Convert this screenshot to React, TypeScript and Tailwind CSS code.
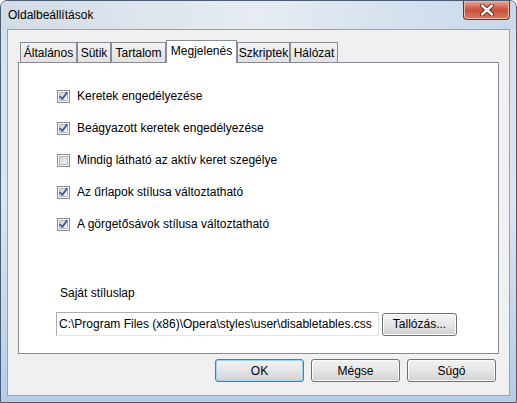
import React from "react";

const font = { fontFamily: '"Liberation Sans", Arial, sans-serif' };

function CheckBox({ checked }: { checked: boolean }) {
  return (
    <svg width="13" height="13" viewBox="0 0 13 13" className="shrink-0">
      <defs>
        <linearGradient id="cbg" x1="0" y1="0" x2="1" y2="1">
          <stop offset="0" stopColor="#cbcfd5" />
          <stop offset="1" stopColor="#f7f7f7" />
        </linearGradient>
      </defs>
      <rect x="0.5" y="0.5" width="12" height="12" fill="#f4f4f4" stroke="#8f8f8f" />
      <rect x="2.5" y="2.5" width="8" height="8" fill="url(#cbg)" stroke="#b6b9bf" strokeWidth="1" />
      {checked && (
        <path d="M3.2 6.6 L5.4 8.9 L9.8 2.8" fill="none" stroke="#3b5a9a" strokeWidth="1.8" strokeLinecap="round" strokeLinejoin="round" />
      )}
    </svg>
  );
}

function Button({ label, primary }: { label: string; primary?: boolean }) {
  return (
    <button
      className={
        "w-full h-[23px] rounded-[3px] border text-[12px] text-black flex items-center justify-center bg-gradient-to-b from-[#f2f2f2] via-[#e6e6e6] to-[#d0d0d0] " +
        (primary
          ? "border-[#3c7fb1] shadow-[inset_0_0_0_1px_#9fd5f5]"
          : "border-[#707070] shadow-[inset_0_0_0_1px_#fcfcfc]")
      }
      style={font}
    >
      {label}
    </button>
  );
}

const tabs = [
  { name: "Általános", w: "w-[57px]" },
  { name: "Sütik", w: "w-[34px]" },
  { name: "Tartalom", w: "w-[55px]" },
  { name: "Megjelenés", w: "w-[71px]", active: true },
  { name: "Szkriptek", w: "w-[53px]" },
  { name: "Hálózat", w: "w-[48px]" },
];

const options = [
  { label: "Keretek engedélyezése", checked: true },
  { label: "Beágyazott keretek engedélyezése", checked: true },
  { label: "Mindig látható az aktív keret szegélye", checked: false },
  { label: "Az űrlapok stílusa változtatható", checked: true },
  { label: "A görgetősávok stílusa változtatható", checked: true },
];

export default function App() {
  return (
    <div className="w-[517px] h-[403px] bg-white" style={font}>
      <div className="w-full h-full flex flex-col rounded-t-[7px] border border-[#4b5d72] bg-gradient-to-b from-[#d6e0ea] via-[#dbe5ef] to-[#b4cde8]">
        {/* title bar */}
        <div className="h-[28px] flex items-start justify-between bg-gradient-to-r from-[#d2dce7] via-[#e6ecf2] to-[#c7d8ea] rounded-t-[6px]">
          <span className="pl-[7px] pt-[6px] text-[12px] text-black leading-[16px]">Oldalbeállítások</span>
          <div className="mr-[6px] w-[47px] h-[19px] rounded-b-[4px] border border-t-0 border-[#6e2e25] bg-gradient-to-b from-[#e7a597] via-[#c9503a] to-[#d97a62] flex items-center justify-center shadow-[inset_0_0_0_1px_#eeb8a8]">
            <svg width="14" height="12" viewBox="0 0 14 12">
              <path d="M2 1.5 L12 10.5 M12 1.5 L2 10.5" stroke="#4a1d16" strokeWidth="4.2" strokeLinecap="round" />
              <path d="M2 1.5 L12 10.5 M12 1.5 L2 10.5" stroke="#ffffff" strokeWidth="2.4" strokeLinecap="round" />
            </svg>
          </div>
        </div>

        {/* client area */}
        <div className="mx-[6px] mb-[6px] flex-1 border border-[#8fa3ba] bg-[#f0f0f0] flex flex-col px-[10px] pt-[10px]">
          {/* tab strip */}
          <div className="h-[22px] flex items-end pl-[2px] relative z-10">
            {tabs.map((t) =>
              t.active ? (
                <div
                  key={t.name}
                  className={t.w + " h-[23px] -mb-px border border-b-0 border-[#898c95] bg-white flex items-center justify-center pb-[2px] text-[12px] text-black"}
                >
                  {t.name}
                </div>
              ) : (
                <div
                  key={t.name}
                  className={t.w + " h-[20px] border border-b-0 border-[#898c95] bg-gradient-to-b from-[#f3f3f3] to-[#e1e1e1] flex items-center justify-center text-[12px] text-black"}
                >
                  {t.name}
                </div>
              )
            )}
          </div>

          {/* tab panel */}
          <div className="h-[292px] border border-[#898c95] bg-white flex flex-col pt-[17px] pb-[17px]">
            <div className="flex flex-col pl-[38px]">
              {options.map((o) => (
                <div key={o.label} className="h-[32px] flex items-center gap-[7px] text-[12px] text-black">
                  <CheckBox checked={o.checked} />
                  <span>{o.label}</span>
                </div>
              ))}
            </div>
            <div className="mt-[45px] pl-[37px] flex flex-col">
              <span className="pl-[4px] h-[16px] leading-[16px] text-[12px] text-black">Saját stíluslap</span>
              <div className="mt-[11px] flex items-center gap-[3px]">
                <div className="w-[323px] h-[24px] border border-[#abadb3] border-b-[#e3e9ef] border-r-[#dbdfe6] flex items-center pl-[2px] text-[12px] text-black bg-white">
                  C:\Program Files (x86)\Opera\styles\user\disabletables.css
                </div>
                <div className="w-[75px]">
                  <Button label="Tallózás..." />
                </div>
              </div>
            </div>
          </div>

          {/* dialog buttons */}
          <div className="mt-[5px] flex justify-end gap-[7px] pr-[3px]">
            <div className="w-[89px]"><Button label="OK" primary /></div>
            <div className="w-[89px]"><Button label="Mégse" /></div>
            <div className="w-[89px]"><Button label="Súgó" /></div>
          </div>
        </div>
      </div>
    </div>
  );
}
